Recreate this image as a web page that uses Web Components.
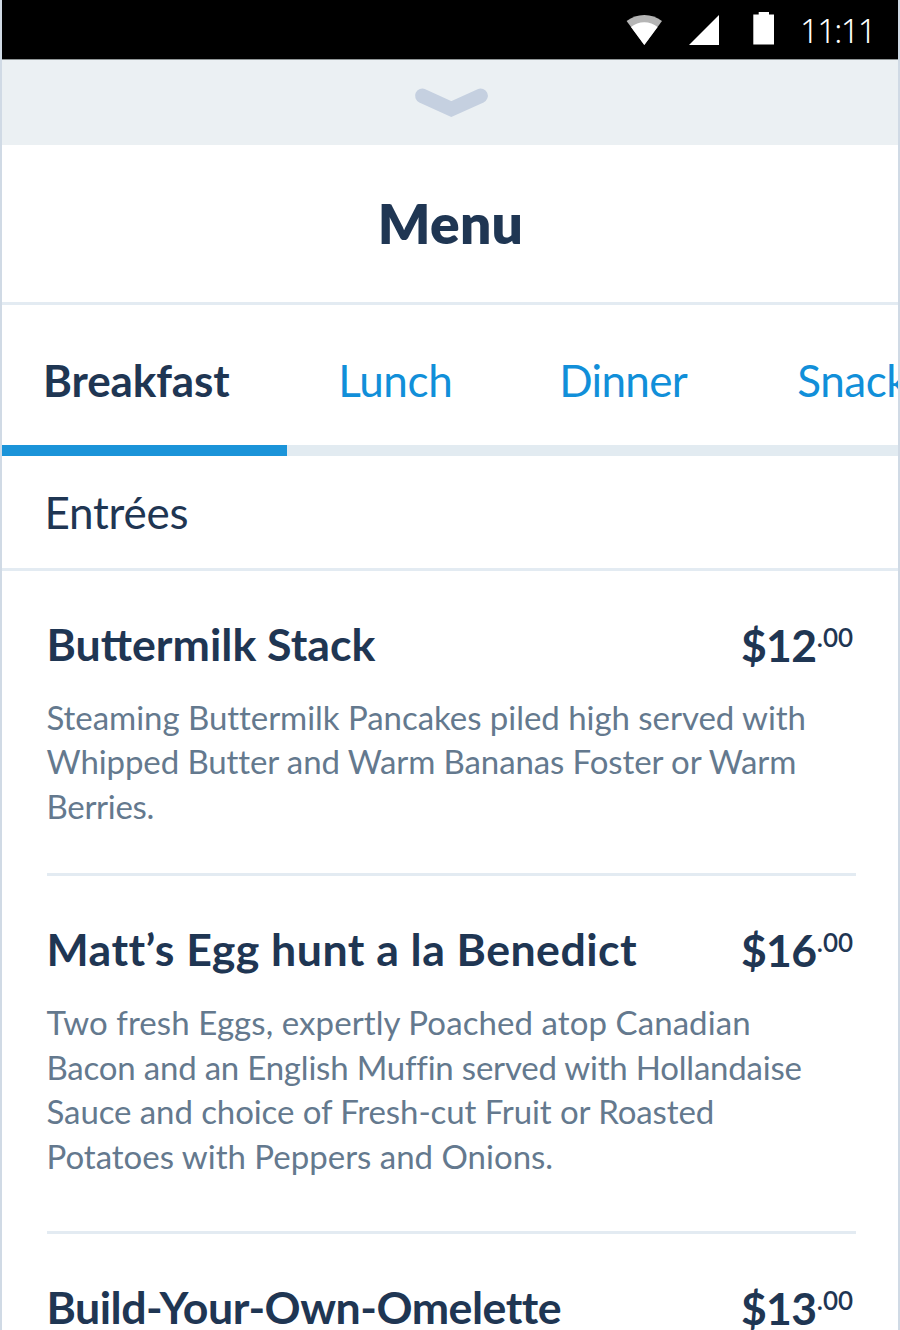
<!DOCTYPE html>
<html lang="en">
<head>
<meta charset="utf-8">
<title>Menu</title>
<style>
html, body { margin: 0; height: 1330px; overflow: hidden; background: #fff; }
body { font-family: Lato, "Open Sans", sans-serif; color: #1f3653; }
</style>
</head>
<body>
<dining-app></dining-app>

<template id="status-bar">
<style>
:host { display: flex; align-items: center; background: #000; color: #fff; border-bottom: 1px solid #8f9596; box-sizing: border-box; height: 60px; padding-left: 624px; }
svg { display: block; flex: none; }
.signal { margin-left: 21px; }
.battery { margin: -3px 0 0 32px; }
time { margin-left: 24px; padding-top: 2px; font: 300 33px/40px "Noto Sans", sans-serif; letter-spacing: -1.7px; white-space: nowrap; }
</style>
<svg width="37" height="32" viewBox="0 0 37 32"><path d="M18.3 31 .6 7.1Q8.3 1 18.3 1T36 7.1Z" fill="#b5b5b5"/><path d="M18.3 31 5 13Q10.800 8.300 18.300 8.300T31.600 13Z" fill="#fff"/></svg>
<svg class="signal" width="36" height="32" viewBox="0 0 36 32"><path d="M5 31 35 1V31Z" fill="#fff"/></svg>
<svg class="battery" width="24" height="34" viewBox="0 0 24 34"><path d="M1.300 3.500H6.700V1H17V3.500H22V33.500H1.300Z" fill="#fff"/></svg>
<time><slot></slot></time>
</template>

<template id="sheet-handle">
<style>
:host { display: flex; justify-content: center; height: 85px; background: #ebf0f3; }
svg { display: block; margin: 24px 0 0 2px; }
</style>
<svg width="80" height="40" viewBox="411 84 80 40"><path d="M422.300 95.800 451.300 109.100 480.600 95.800" fill="none" stroke="#c5d0e0" stroke-width="14.500" stroke-linecap="round"/></svg>
</template>

<template id="page-title">
<style>
:host { display: flex; align-items: center; justify-content: center; height: 160px; box-sizing: border-box; border-bottom: 3px solid #e3ebf2; padding: 0 0 1px 1px; }
h1 { margin: 0; font-size: 55px; font-weight: 800; line-height: 66px; letter-spacing: .300px; }
</style>
<h1><slot></slot></h1>
</template>

<template id="tab-strip">
<style>
:host { display: flex; height: 151px; overflow: hidden; }
</style>
<slot></slot>
</template>

<template id="tab-item">
<style>
:host { display: block; box-sizing: border-box; flex: none; width: var(--w); padding: 48px 0 0 51.300px; border-bottom: 11px solid #e2ebf1; font-size: 44px; line-height: 54px; letter-spacing: var(--ls, 0); color: #118fd9; white-space: nowrap; }
:host([selected]) { border-color: #1b94d9; padding-left: 41px; color: #1f3653; font-weight: 700; }
</style>
<slot></slot>
</template>

<template id="section-title">
<style>
:host { display: flex; align-items: center; height: 115px; box-sizing: border-box; border-bottom: 3px solid #e3ebf2; padding: 0 0 1px 42.500px; }
h2 { margin: 0; font-size: 44px; font-weight: 400; line-height: 54px; letter-spacing: -.250px; }
</style>
<h2><slot></slot></h2>
</template>

<template id="menu-item">
<style>
:host { display: block; margin: 0 42.500px 0 44.500px; padding: 46.300px 0 var(--gap, 44px); border-bottom: 3px solid #e3ebf2; }
header { display: flex; height: 54px; }
h3 { flex: 1; margin: 0; font-size: 44.700px; font-weight: 700; line-height: 54px; letter-spacing: var(--ls, normal); white-space: nowrap; }
.price { display: flex; flex: none; width: 114.500px; font-size: 44.500px; font-weight: 700; line-height: 56px; letter-spacing: -.700px; }
.cents { font-size: 26px; font-weight: 600; line-height: 40px; letter-spacing: 0; margin-left: .500px; }
.body { margin-top: 23.400px; color: #64798e; font-size: 33px; line-height: 44.800px; white-space: nowrap; }
</style>
<header><h3><slot name="name"></slot></h3><div class="price"><slot name="price"></slot><span class="cents"><slot name="cents"></slot></span></div></header>
<div class="body"><slot></slot></div>
</template>

<template id="text-line">
<style>:host { display: block; letter-spacing: var(--ls, normal); }</style>
<slot></slot>
</template>

<template id="dining-app">
<style>
:host { display: block; box-sizing: border-box; width: 900px; height: 1330px; overflow: hidden; border: solid #d0dae5; border-width: 0 2px; background: #fff; }
</style>
<status-bar>11:11</status-bar>
<sheet-handle></sheet-handle>
<page-title>Menu</page-title>
<tab-strip>
<tab-item selected style="--w:285px;--ls:-.1px">Breakfast</tab-item>
<tab-item style="--w:221px;--ls:-.4px">Lunch</tab-item>
<tab-item style="--w:238px;--ls:-.7px">Dinner</tab-item>
<tab-item style="--w:240px;--ls:-.45px">Snacks</tab-item>
</tab-strip>
<section-title>Entrées</section-title>
<menu-item>
<span slot="name">Buttermilk Stack</span><span slot="price">$12</span><span slot="cents">.00</span>
<text-line style="--ls:-.04px">Steaming Buttermilk Pancakes piled high served with</text-line>
<text-line style="--ls:-.1px">Whipped Butter and Warm Bananas Foster or Warm</text-line>
<text-line style="--ls:-.3px">Berries.</text-line>
</menu-item>
<menu-item style="--ls:.45px;--gap:52px">
<span slot="name">Matt’s Egg hunt a la Benedict</span><span slot="price">$16</span><span slot="cents">.00</span>
<text-line style="--ls:.08px">Two fresh Eggs, expertly Poached atop Canadian</text-line>
<text-line style="--ls:-.21px">Bacon and an English Muffin served with Hollandaise</text-line>
<text-line style="--ls:-.09px">Sauce and choice of Fresh-cut Fruit or Roasted</text-line>
<text-line style="--ls:0px">Potatoes with Peppers and Onions.</text-line>
</menu-item>
<menu-item style="--ls:-.5px">
<span slot="name">Build-Your-Own-Omelette</span><span slot="price">$13</span><span slot="cents">.00</span>
</menu-item>
</template>

<script>
class TemplateElement extends HTMLElement {
  constructor() {
    super();
    const template = document.getElementById(this.localName);
    this.attachShadow({ mode: 'open' }).append(template.content.cloneNode(true));
  }
}
for (const name of ['status-bar', 'sheet-handle', 'page-title', 'tab-strip', 'tab-item', 'section-title', 'text-line', 'menu-item', 'dining-app']) {
  customElements.define(name, class extends TemplateElement {});
}
</script>
</body>
</html>
